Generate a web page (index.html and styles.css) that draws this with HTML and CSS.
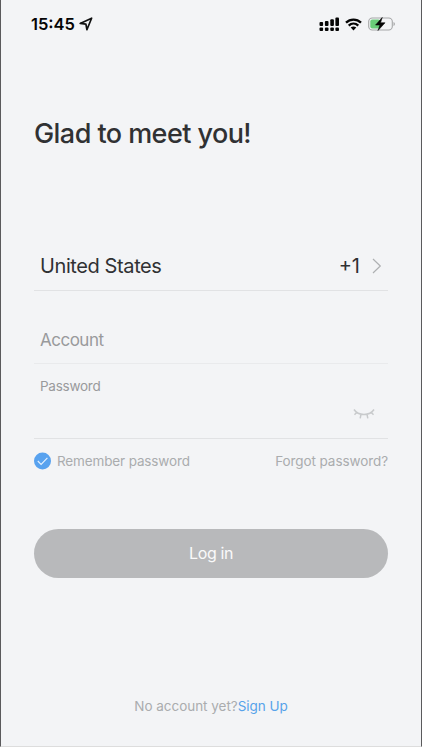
FILE: index.html
```html
<!DOCTYPE html>
<html lang="en">
<head>
<meta charset="utf-8">
<title>Log in</title>
<link rel="stylesheet" href="styles.css">
</head>
<body>
<main class="screen">
  <header class="status">
    <span class="time">15:45</span>
    <svg class="location" width="14" height="14" viewBox="0 0 14 14"><path d="M1.2 6.4 12.6 1.2 7.9 12.7 6.9 7.1Z" fill="none" stroke="#111" stroke-width="1.7" stroke-linejoin="round"/></svg>
    <svg class="signal" width="21" height="15" viewBox="0 0 21 15" fill="#050505"><rect x=".5" y="5" width="3.6" height="4" rx="1"/><rect x="5.9" y="4" width="3.6" height="5" rx="1"/><rect x="11.3" y="2.2" width="3.6" height="6.8" rx="1"/><rect x="16.4" y=".6" width="3.6" height="8.4" rx="1"/><rect x=".5" y="10.4" width="3.6" height="3.6" rx="1"/><rect x="5.9" y="10.4" width="3.6" height="3.6" rx="1"/><rect x="11.3" y="10.4" width="3.6" height="3.6" rx="1"/><rect x="16.4" y="10.4" width="3.6" height="3.6" rx="1"/></svg>
    <svg class="wifi" width="17" height="13" viewBox="0 0 17 13"><path d="M1 4.6C5.2.5 11.8.5 16 4.600M3.700 7.600C6.500 4.900 10.500 4.900 13.300 7.600" fill="none" stroke="#050505" stroke-width="2.300"/><path d="M5.700 9.500Q8.500 7.300 11.300 9.500L8.500 12.400Z" fill="#050505"/></svg>
    <svg class="battery" width="28" height="16" viewBox="0 0 28 16"><rect x=".7" y="2" width="23.600" height="12" rx="3.600" fill="none" stroke="#a5a6a7" stroke-width="1.100"/><rect x="2.300" y="3.600" width="10" height="8.800" rx="2" fill="#69cc78"/><path d="M25.500 6v4c1.900-.8 1.900-3.200 0-4Z" fill="#a5a6a7"/><path d="M14.200 1.500 7.600 9h4.400L10 14.500l7-7.700h-4.500Z" fill="#050505" stroke="#050505" stroke-width=".6"/></svg>
  </header>
  <h1 class="title">Glad to meet you!</h1>
  <section class="region"><span class="country">United States</span><span class="code">+1</span><svg class="chevron" width="10" height="16" viewBox="0 0 10 16"><path d="m1 1 7.300 7L1 15" fill="none" stroke="#aeb0b2" stroke-width="1.200"/></svg></section>
  <section class="account"><span class="account-label">Account</span></section>
  <section class="password">
    <span class="password-label">Password</span>
    <svg class="eye" width="22" height="12" viewBox="0 0 22 12"><path d="M1 1.500C5.300 8 16.700 8 21 1.500M3.800 4.300 1.500 6.700M8 6.200 7.200 10.300M14 6.200 14.800 10.300M18.200 4.300 20.500 6.700" fill="none" stroke="#c8cacc" stroke-width="1.500"/></svg>
  </section>
  <section class="options">
    <svg class="check" width="18" height="18" viewBox="0 0 18 18"><circle cx="8.500" cy="9" r="8.500" fill="#58a2ef"/><path d="m3.800 9 3.300 3.400 6.300-6.600" fill="none" stroke="#e6f2ff" stroke-width="1.100"/></svg>
    <span class="remember">Remember password</span><a class="forgot">Forgot password?</a>
  </section>
  <button class="login">Log in</button>
  <footer class="signup"><span>No account yet?</span><a>Sign Up</a></footer>
</main>
</body>
</html>
```
FILE: styles.css
```css
* { box-sizing: border-box; }
body { margin: 0; background: #fff; font-family: Inter, "Liberation Sans", sans-serif; }
.screen { display: flex; flex-direction: column; width: 422px; height: 747px; padding: 0 33px; background: #f3f4f6; border-left: 1px solid #5a5a5c; border-right: 1px solid #5a5a5c; border-bottom: 1px solid #ddd; }
.status { display: flex; align-items: center; height: 48px; margin: 0 -8px 0 -3px; color: #050505; }
.time { width: 45px; font-size: 16.5px; font-weight: 600; white-space: nowrap; }
.location { margin-left: 3px; }
.signal { margin-left: auto; }
.wifi { margin-left: 5px; }
.battery { margin-left: 6px; }
.title { height: 36px; margin: 68px 0 0; color: #303133; font-size: 27px; line-height: 36px; font-weight: 500; letter-spacing: -.56px; white-space: nowrap; }
.region { display: flex; align-items: center; height: 50px; margin-top: 89px; padding: 0 6px; border-bottom: 1px solid #e1e2e4; color: #303133; font-size: 20px; }
.country { letter-spacing: -.4px; }
.code { margin-left: auto; }
.chevron { margin-left: 12px; }
.account { display: flex; align-items: center; height: 73px; padding: 25px 6px 0; border-bottom: 1px solid #e9eaec; color: #999a9c; font-size: 17px; letter-spacing: -.5px; }
.password { display: flex; justify-content: space-between; height: 75px; padding: 13px 13px 0 6px; border-bottom: 1px solid #e1e2e4; color: #999a9c; font-size: 13.5px; line-height: 18px; }
.password-label { letter-spacing: -.25px; }
.eye { margin-top: 31px; }
.options { display: flex; align-items: center; height: 44px; color: #aaacae; font-size: 13.5px; letter-spacing: -.14px; }
.remember { margin-left: 5px; }
.forgot { margin-left: auto; letter-spacing: -.08px; }
.login { height: 49px; margin: 45.5px 0 0; padding: 0; border: 0; border-radius: 25px; background: #b8b9bb; color: #fafafa; font: 400 16px Inter, sans-serif; letter-spacing: -.4px; }
.signup { display: flex; justify-content: center; margin-top: 118.5px; color: #aaacae; font-size: 13.5px; line-height: 20px; letter-spacing: -.03px; }
.signup a { color: #57a3ea; }
```
